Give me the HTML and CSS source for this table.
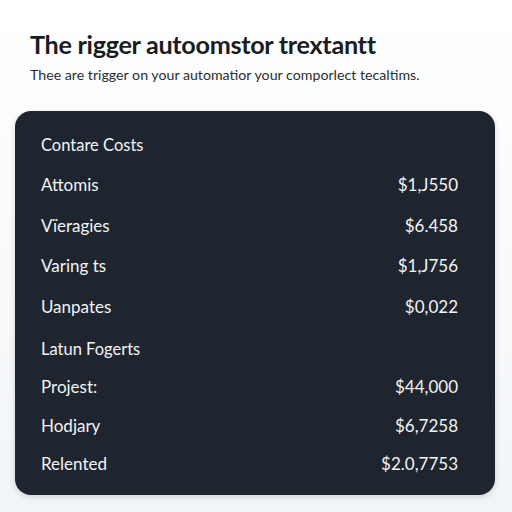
FILE: index.html
```html
<!DOCTYPE html>
<html>
<head>
<meta charset="utf-8">
<link rel="stylesheet" href="styles.css">
</head>
<body>
<div class="page">
  <h1 class="title">The rigger autoomstor trextantt</h1>
  <p class="subtitle">Thee are trigger on your automatior your comporlect tecaltims.</p>
  <div class="card">
    <div class="section">
      <div class="head">Contare Costs</div>
      <div class="row"><span>Attomis</span><span>$1,J550</span></div>
      <div class="row"><span>Vïeragies</span><span>$6.458</span></div>
      <div class="row"><span>Varing ts</span><span>$1,J756</span></div>
      <div class="row"><span>Uanpates</span><span>$0,022</span></div>
    </div>
    <div class="section second">
      <div class="head">Latun Fogerts</div>
      <div class="row"><span>Projest:</span><span>$44,000</span></div>
      <div class="row"><span>Hodjary</span><span>$6,7258</span></div>
      <div class="row"><span>Relented</span><span>$2.0,7753</span></div>
    </div>
  </div>
</div>
</body>
</html>
```
FILE: styles.css
```css
* { box-sizing: border-box; }
html, body { margin: 0; padding: 0; }
body {
  width: 512px;
  height: 512px;
  overflow: hidden;
  background: linear-gradient(#ffffff, #f2f5f8);
  font-family: Lato, "Open Sans", sans-serif;
}
.page {
  padding: 27px 17px 0 15px;
}
.title {
  margin: 0 0 0 15px;
  font-size: 25.2px;
  font-weight: 700;
  line-height: 34px;
  color: #1a1c1f;
  letter-spacing: -0.3px;
}
.subtitle {
  margin: 4px 0 0 15px;
  font-size: 14.2px;
  line-height: 20px;
  color: #2a2d31;
}
.card {
  margin-top: 26px;
  height: 384px;
  background: #1f252e;
  border-radius: 16px;
  padding: 14px 37px 0 26px;
  color: #f2f4f6;
  box-shadow: 0 2px 6px rgba(0,0,0,0.15);
}
.head {
  height: 40px;
  line-height: 40px;
  font-size: 16.5px;
}
.row {
  display: flex;
  justify-content: space-between;
  height: 40.5px;
  line-height: 40px;
  font-size: 17px;
}
.second { margin-top: 4px; }
.second .head { height: 37px; line-height: 36px; }
.second .row { height: 38.5px; line-height: 38px; }
```
